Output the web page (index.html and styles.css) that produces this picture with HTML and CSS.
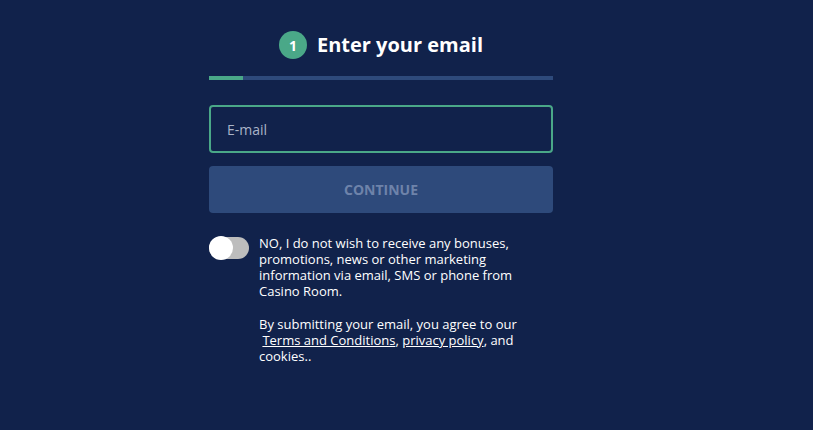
FILE: index.html
```html
<!DOCTYPE html>
<html lang="en">
<head>
    <meta charset="UTF-8">
    <meta name="viewport" content="width=device-width, initial-scale=1.0">
    <title>Enter your email</title>
    <link rel="stylesheet" href="styles.css">
</head>
<body>
    <div class="signup">
        <div class="step-header">
            <span class="step-num">1</span>
            <h1>Enter your email</h1>
        </div>
        <div class="progress"><div class="progress-fill"></div></div>

        <input class="email-input" type="email" placeholder="E-mail">
        <button class="continue-btn" disabled>CONTINUE</button>

        <div class="optout">
            <label class="toggle">
                <span class="knob"></span>
            </label>
            <div class="optout-text">
                <p>NO, I do not wish to receive any bonuses, promotions, news or other marketing information via email, SMS or phone from Casino Room.</p>
                <p>By submitting your email, you agree to our<br>&nbsp;<a href="#">Terms and Conditions</a>, <a href="#">privacy policy</a>, and cookies..</p>
            </div>
        </div>
    </div>
</body>
</html>
```

FILE: styles.css
```css
body {
    margin: 0;
    background: #11224b;
    font-family: 'Open Sans', sans-serif;
    color: white;
}

.signup {
    width: 344px;
    margin-left: 209px;
    padding-top: 31px;
}

/* step title */
.step-header {
    display: flex;
    align-items: center;
    justify-content: center;
    gap: 10px;
}

.step-num {
    width: 28px;
    height: 28px;
    border-radius: 50%;
    background: #4aa888;
    font-size: 14px;
    font-weight: 700;
    display: flex;
    align-items: center;
    justify-content: center;
}

h1 {
    margin: 0;
    font-size: 20px;
    font-weight: 700;
    line-height: 28px;
}

.progress {
    margin-top: 17px;
    height: 4px;
    background: #2e4a7b;
}

.progress-fill {
    width: 34px;
    height: 100%;
    background: #4aa888;
}

.email-input {
    display: block;
    box-sizing: border-box;
    width: 100%;
    height: 48px;
    margin-top: 25px;
    padding: 0 16px;
    border: 2px solid #4aa888;
    border-radius: 4px;
    background: #11224b;
    color: white;
    font-family: inherit;
    font-size: 14px;
    outline: none;
}

.email-input::placeholder {
    color: #aab4c8;
}

.continue-btn {
    display: block;
    width: 100%;
    height: 47px;
    margin-top: 13px;
    border: none;
    border-radius: 4px;
    background: #2e4a7b;
    color: #6e83aa;
    font-family: inherit;
    font-size: 14px;
    font-weight: 700;
}

/* marketing opt out */
.optout {
    display: flex;
    gap: 10px;
    margin-top: 23px;
}

.toggle {
    position: relative;
    flex: none;
    width: 40px;
    height: 22px;
    margin-top: 1px;
    border-radius: 11px;
    background: #bdbdbd;
}

.knob {
    position: absolute;
    left: 0;
    top: -1px;
    width: 24px;
    height: 24px;
    border-radius: 50%;
    background: white;
}

.optout-text {
    width: 270px;
    font-size: 13px;
    line-height: 16px;
    margin-top: -1px;
}

.optout-text p {
    margin: 0 0 17px;
}

.optout-text a {
    color: white;
}
```
